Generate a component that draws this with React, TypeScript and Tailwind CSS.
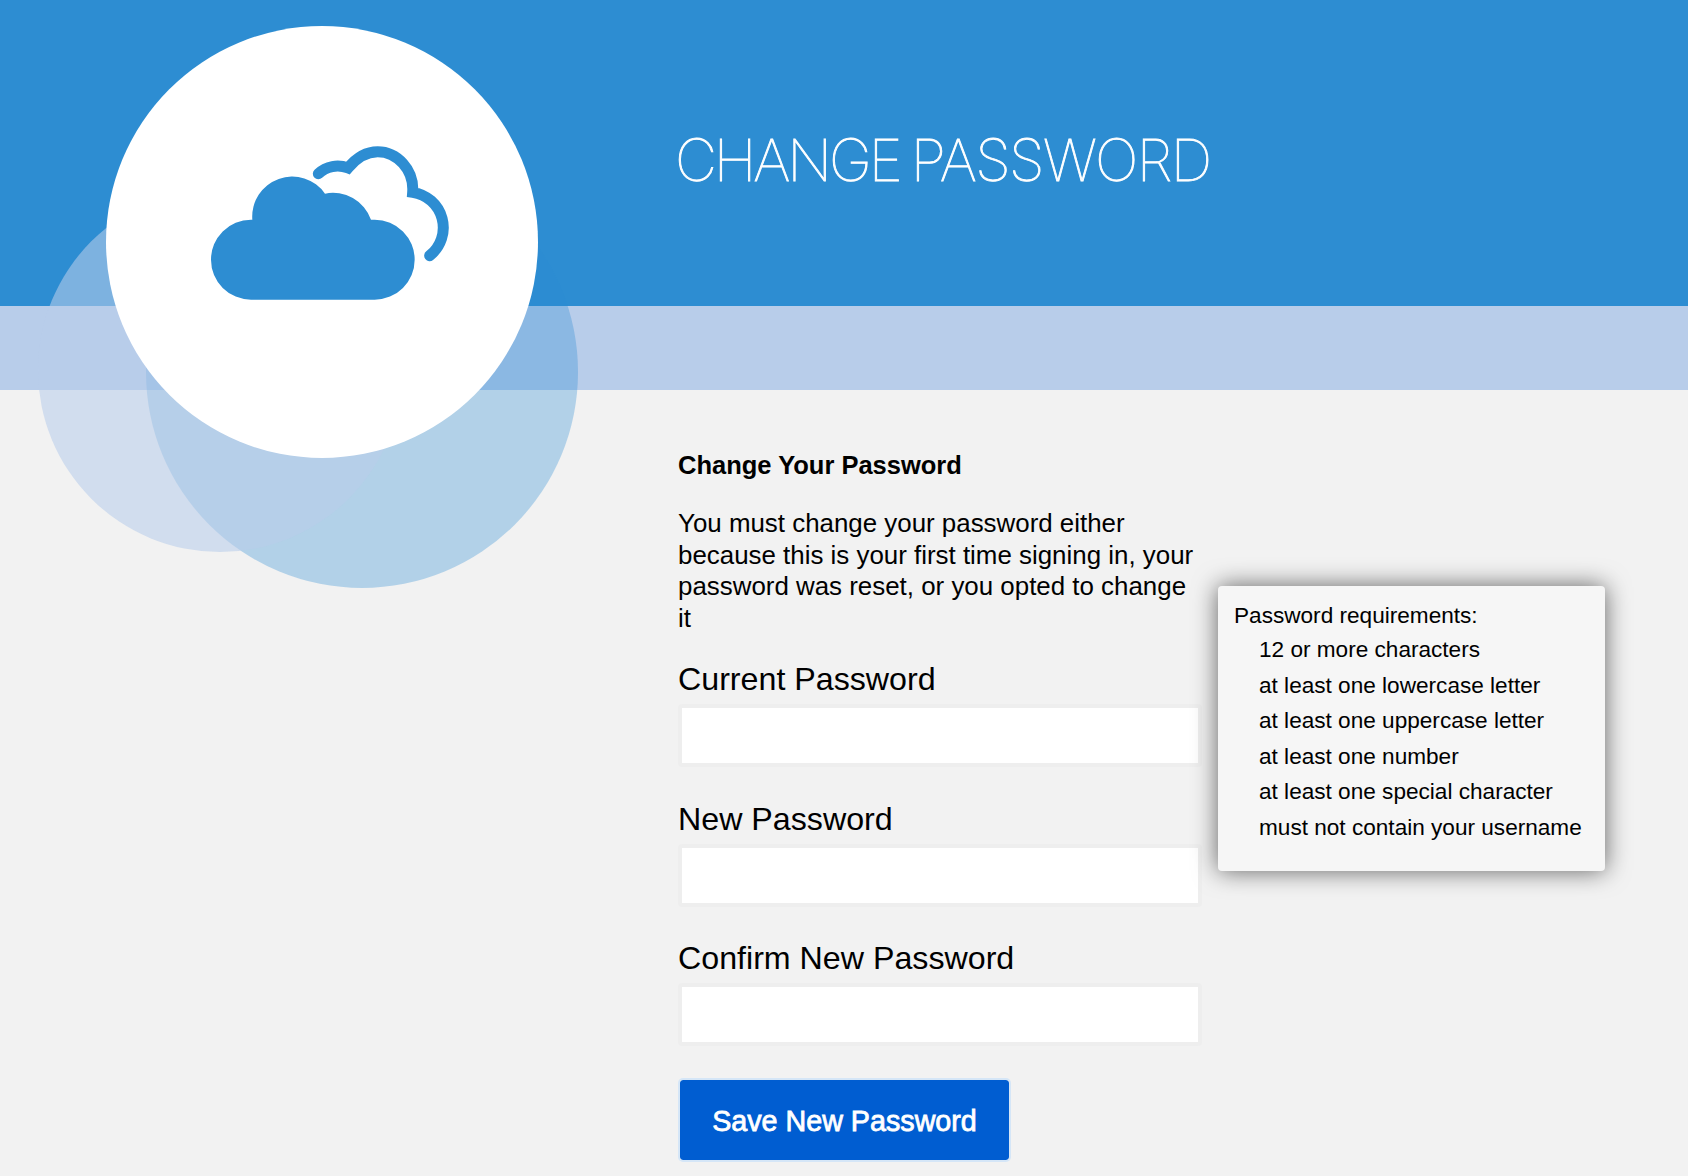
const requirements = [
  '12 or more characters',
  'at least one lowercase letter',
  'at least one uppercase letter',
  'at least one number',
  'at least one special character',
  'must not contain your username',
];

function CloudLogo() {
  return (
    <svg viewBox="0 0 840 570" className="absolute left-[84px] top-[104px] h-[190px] w-[280px]" aria-hidden="true">
      <path
        d="M183 509A120 120 0 0 1 183 269H187A120 120 0 0 1 405 191A121 121 0 0 1 543 269H554A120 120 0 0 1 554 509Z"
        fill="#2d8dd2"
      />
      <path
        d="M385 131A85 85 0 0 1 474 114C500 82 532 65 563 65C620 65 673 118 668 187A107 107 0 0 1 719 377"
        fill="none"
        stroke="#2d8dd2"
        strokeWidth="33"
        strokeLinecap="round"
        strokeLinejoin="miter"
      />
    </svg>
  );
}

function Field({ label, id }: { label: string; id: string }) {
  return (
    <div className="mb-[29.5px] flex h-[108px] flex-col justify-between">
      <label htmlFor={id} className="text-[32.2px] leading-[40px] whitespace-nowrap">
        {label}
      </label>
      <input
        id={id}
        type="password"
        className="h-[63px] w-[524px] rounded-[4px] border-4 border-[#eeeeee] bg-white px-3 outline-none"
      />
    </div>
  );
}

export default function App() {
  return (
    <div className="relative h-[1176px] w-full overflow-hidden bg-[#f2f2f2] font-['Liberation_Sans',Arial,sans-serif] text-black">
      <header className="h-[306px] bg-[#2d8dd2] pt-[125px] pl-[675px]">
        <h1 className="relative z-10 font-['Inter',sans-serif] text-[58px] leading-[70px] font-thin tracking-[-3.1px] whitespace-nowrap text-white [-webkit-text-stroke:0.9px_white] [word-spacing:-2px]">
          CHANGE <span className="tracking-[-1.7px]">PASSWORD</span>
        </h1>
      </header>
      <div className="h-[84px] bg-[#b8cdea]" />

      <div className="absolute left-[146px] top-[156px] size-[432px] rounded-full bg-[#2d8dd252]" />
      <div className="absolute left-[38px] top-[188px] size-[364px] rounded-full bg-[#b8cdea94]" />
      <div className="absolute left-[106px] top-[26px] size-[432px] rounded-full bg-white">
        <CloudLogo />
      </div>

      <main className="relative ml-[678px] w-[524px] pt-[59px]">
        <h2 className="text-[25.5px] leading-[32px] font-bold">Change Your Password</h2>
        <p className="mt-[27px] mb-[19px] text-[25.9px] leading-[31.7px]">
          You must change your password either
          <br />
          because this is your first time signing in, your
          <br />
          password was reset, or you opted to change
          <br />
          it
        </p>
        <form className="flex flex-col" onSubmit={(e) => e.preventDefault()}>
          <div className="flex flex-col gap-[2px] pt-[5.5px]">
            <Field label="Current Password" id="current" />
            <Field label="New Password" id="new" />
            <Field label="Confirm New Password" id="confirm" />
          </div>
          <button className="mt-[2.4px] h-[84px] w-[333px] rounded-[5px] border-2 border-[#d5e6f7] bg-[#005dd1] bg-clip-padding pt-[2px] text-[28.7px] whitespace-nowrap text-white [-webkit-text-stroke:0.8px_white]">
            Save New Password
          </button>
        </form>

        <aside className="absolute left-[540px] top-[196px] h-[285px] w-[387px] rounded-[4px] bg-[#f6f6f6] pt-[16px] pl-[16px] text-[22.6px] shadow-[0_0_24px_rgba(0,0,0,0.6)]">
          <p className="leading-[28px]">Password requirements:</p>
          <ul className="pt-[2px] pl-[25px] leading-[35.6px]">
            {requirements.map((r) => (
              <li key={r} className="whitespace-nowrap">
                {r}
              </li>
            ))}
          </ul>
        </aside>
      </main>
    </div>
  );
}
